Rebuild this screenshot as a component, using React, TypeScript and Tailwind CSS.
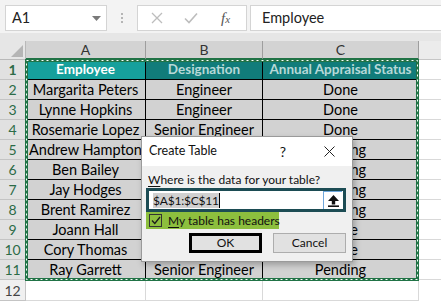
import React from 'react';

// B5:B10 sit fully under the dialog, so they're left blank
const rows = [
  ['Margarita Peters', 'Engineer', 'Done'],
  ['Lynne Hopkins', 'Engineer', 'Done'],
  ['Rosemarie Lopez', 'Senior Engineer', 'Done'],
  ['Andrew Hampton', '', 'Pending'],
  ['Ben Bailey', '', 'Pending'],
  ['Jay Hodges', '', 'Pending'],
  ['Brent Ramirez', '', 'Pending'],
  ['Joann Hall', '', 'Done'],
  ['Cory Thomas', '', 'Done'],
  ['Ray Garrett', 'Senior Engineer', 'Pending'],
];

function FormulaBar() {
  return (
    <div className="flex h-[33px] items-start bg-[#f3f3f3] pt-[5px]">
      <div className="ml-[5px] flex h-[26px] w-[102px] items-center border border-[#d4d4d4] bg-white pl-[6px] text-[14.5px] text-[#222]">
        <span>A1</span>
        <svg className="ml-auto mr-[5px]" width="9" height="5" viewBox="0 0 9 5">
          <path d="M0 0h9L4.5 5z" fill="#7a7a7a" />
        </svg>
      </div>
      <div className="flex h-[26px] w-[30px] flex-col items-center justify-center gap-[2px]">
        <span className="h-[2px] w-[2px] bg-[#b5b5b5]" />
        <span className="h-[2px] w-[2px] bg-[#b5b5b5]" />
        <span className="h-[2px] w-[2px] bg-[#b5b5b5]" />
      </div>
      <div className="flex h-[26px] w-[110px] items-center border border-[#d4d4d4] bg-white pl-[13px]">
        <svg width="12" height="12" viewBox="0 0 12 12">
          <path d="M1 1l10 10M11 1L1 11" stroke="#bdbdbd" strokeWidth="1.3" />
        </svg>
        <svg className="ml-[21px]" width="14" height="12" viewBox="0 0 14 12">
          <path d="M1 6.5l4 4L13 1.5" stroke="#bdbdbd" strokeWidth="1.6" fill="none" />
        </svg>
        <span className="ml-[23px] font-['Liberation_Serif',serif] text-[15px] italic text-[#555]">
          f<span className="text-[11px]">x</span>
        </span>
      </div>
      <div className="ml-[3px] -mr-[4px] flex h-[26px] flex-1 items-center border border-[#d4d4d4] bg-white pl-[11px] text-[14.5px] text-[#222]">
        Employee
      </div>
    </div>
  );
}

function ColumnHeaders() {
  return (
    <>
      <div className="h-[8px] bg-[#e6e6e6]" />
      <div className="flex h-[19px] bg-[#e6e6e6] text-[14px] text-[#333]">
        <div className="relative w-[26px] border-r border-b border-[#b9b9b9] bg-[#e6e6e6]">
          <svg className="absolute right-[2px] bottom-[2px]" width="12" height="12" viewBox="0 0 12 12">
            <path d="M12 0v12H0z" fill="#b5b5b5" />
          </svg>
        </div>
        {[
          ['A', 'w-[120px]'],
          ['B', 'w-[117px]'],
          ['C', 'w-[156px]'],
        ].map(([l, w]) => (
          <div
            key={l}
            className={`${w} flex items-center justify-center border-r border-b-2 border-r-[#9e9e9e] border-b-[#217346] bg-[#d3d3d3] leading-none`}
          >
            {l}
          </div>
        ))}
        <div className="flex-1 border-b border-[#c6c6c6] bg-[#ececec]" />
      </div>
    </>
  );
}

function RowHead({ n, sel }: { n: number; sel: boolean }) {
  return (
    <div
      className={`flex w-[26px] items-center justify-center border-r border-b text-[14px] ${
        sel
          ? 'border-r-[#217346] border-b-[#c4c4c4] bg-[#e1e1e1] text-[#2c6b47]'
          : 'border-r-[#c4c4c4] border-b-[#c4c4c4] bg-[#f0f0f0] text-[#444]'
      }`}
    >
      {n}
    </div>
  );
}

function Sheet() {
  return (
    <div className="font-['Lato',sans-serif]">
      {/* header row of table */}
      <div className="flex h-[20px] text-[13.5px] font-bold">
        <RowHead n={1} sel />
        <div className="flex w-[120px] items-center justify-center border-r border-b border-black bg-[#16a09c] text-white">
          Employee
        </div>
        <div className="flex w-[117px] items-center justify-center border-r border-b border-black bg-[#117c7a] text-[#b7d9d8]">
          Designation
        </div>
        <div className="flex w-[156px] items-center justify-center border-r border-b border-black bg-[#117c7a] text-[#b7d9d8] whitespace-nowrap">
          Annual Appraisal Status
        </div>
        <div className="flex-1 border-b border-[#d9d9d9] bg-white" />
      </div>
      {rows.map((r, i) => (
        <div key={i} className="flex h-[20px] text-[14.5px] text-black">
          <RowHead n={i + 2} sel />
          <div className="flex w-[120px] items-center justify-center border-r border-b border-black bg-[#d2d2d2] whitespace-nowrap">
            {r[0]}
          </div>
          <div className="flex w-[117px] items-center justify-center border-r border-b border-black bg-[#d2d2d2] whitespace-nowrap">
            {r[1]}
          </div>
          <div className="flex w-[156px] items-center justify-center border-r border-b border-black bg-[#d2d2d2]">
            {r[2]}
          </div>
          <div className="flex-1 border-b border-[#d9d9d9] bg-white" />
        </div>
      ))}
      <div className="flex h-[21px]">
        <RowHead n={12} sel={false} />
        <div className="w-[120px] border-r border-b border-[#d9d9d9]" />
        <div className="w-[117px] border-r border-b border-[#d9d9d9]" />
        <div className="w-[156px] border-r border-b border-[#d9d9d9]" />
        <div className="flex-1" />
      </div>
    </div>
  );
}

function Dialog() {
  return (
    <div className="absolute left-[141px] top-[136px] flex h-[126px] w-[212px] flex-col border border-[#9a9a9a] bg-[#f0f0f0] font-['Lato',sans-serif] text-[12px] text-[#111] shadow-[2px_3px_6px_rgba(0,0,0,0.25)]">
      <div className="flex h-[29px] items-center bg-white pl-[7px]">
        <span className="text-[12.5px]">Create Table</span>
        <span className="ml-auto text-[14px]">?</span>
        <svg className="ml-[38px] mr-[17px]" width="11" height="11" viewBox="0 0 11 11">
          <path d="M0.5 0.5l10 10M10.5 0.5l-10 10" stroke="#222" strokeWidth="1" />
        </svg>
      </div>
      <div className="flex flex-1 flex-col px-[4px]">
        <div className="mt-[7px] whitespace-nowrap pl-[2px] leading-[14px]">
          <span className="underline underline-offset-2">W</span>here is the data for your table?
        </div>
        <div className="mt-[1px] flex h-[24px] w-[200px] items-center border-[3px] border-[#1c4c54] bg-white pl-[4px] pr-[1px]">
          <span className="bg-[#d0d0d0] leading-[15px] tracking-[-0.2px]">$A$1:$C$11</span>
          <span className="h-[15px] w-px bg-black" />
          <div className="ml-auto flex h-[18px] w-[19px] items-center justify-center border-t border-l border-[#6fa7dc] bg-white">
            <svg width="11" height="12" viewBox="0 0 11 12">
              <path d="M5.5 0L11 6H7.2v3.6H3.8V6H0z" fill="#111" />
              <rect x="0" y="10.4" width="11" height="1.6" fill="#111" />
            </svg>
          </div>
        </div>
        <div className="flex h-[17px] w-[133px] items-center whitespace-nowrap bg-[#8dbf3e] pl-[3px]">
          <div className="flex h-[13px] w-[13px] shrink-0 items-center justify-center border border-[#333]">
            <svg width="10" height="9" viewBox="0 0 10 9">
              <path d="M1 4.5l2.8 3L9 1" stroke="#1b1b1b" strokeWidth="1.3" fill="none" />
            </svg>
          </div>
          <span className="ml-[6px] leading-[14px]">
            <span className="underline underline-offset-2">M</span>y table has headers
          </span>
        </div>
        <div className="mt-[4px] flex gap-[11px] pl-[43px]">
          <div className="flex h-[20px] w-[73px] items-center justify-center border-[3px] border-black bg-[#e1e1e1]">
            OK
          </div>
          <div className="flex h-[20px] w-[73px] items-center justify-center border border-[#adadad] bg-[#e1e1e1]">
            Cancel
          </div>
        </div>
      </div>
    </div>
  );
}

function MarchingAnts() {
  return (
    <svg className="pointer-events-none absolute left-[25px] top-[59px]" width="394" height="222">
      <rect x="1.5" y="1.5" width="391" height="219" fill="none" stroke="#217346" strokeWidth="3" />
      <rect x="1.5" y="1.5" width="391" height="219" fill="none" stroke="#ffffff" strokeWidth="1" strokeDasharray="2 3" />
    </svg>
  );
}

export default function App() {
  return (
    <div className="relative h-[301px] w-[441px] overflow-hidden bg-white font-['Lato',sans-serif]">
      <FormulaBar />
      <ColumnHeaders />
      <Sheet />
      <MarchingAnts />
      <Dialog />
    </div>
  );
}
